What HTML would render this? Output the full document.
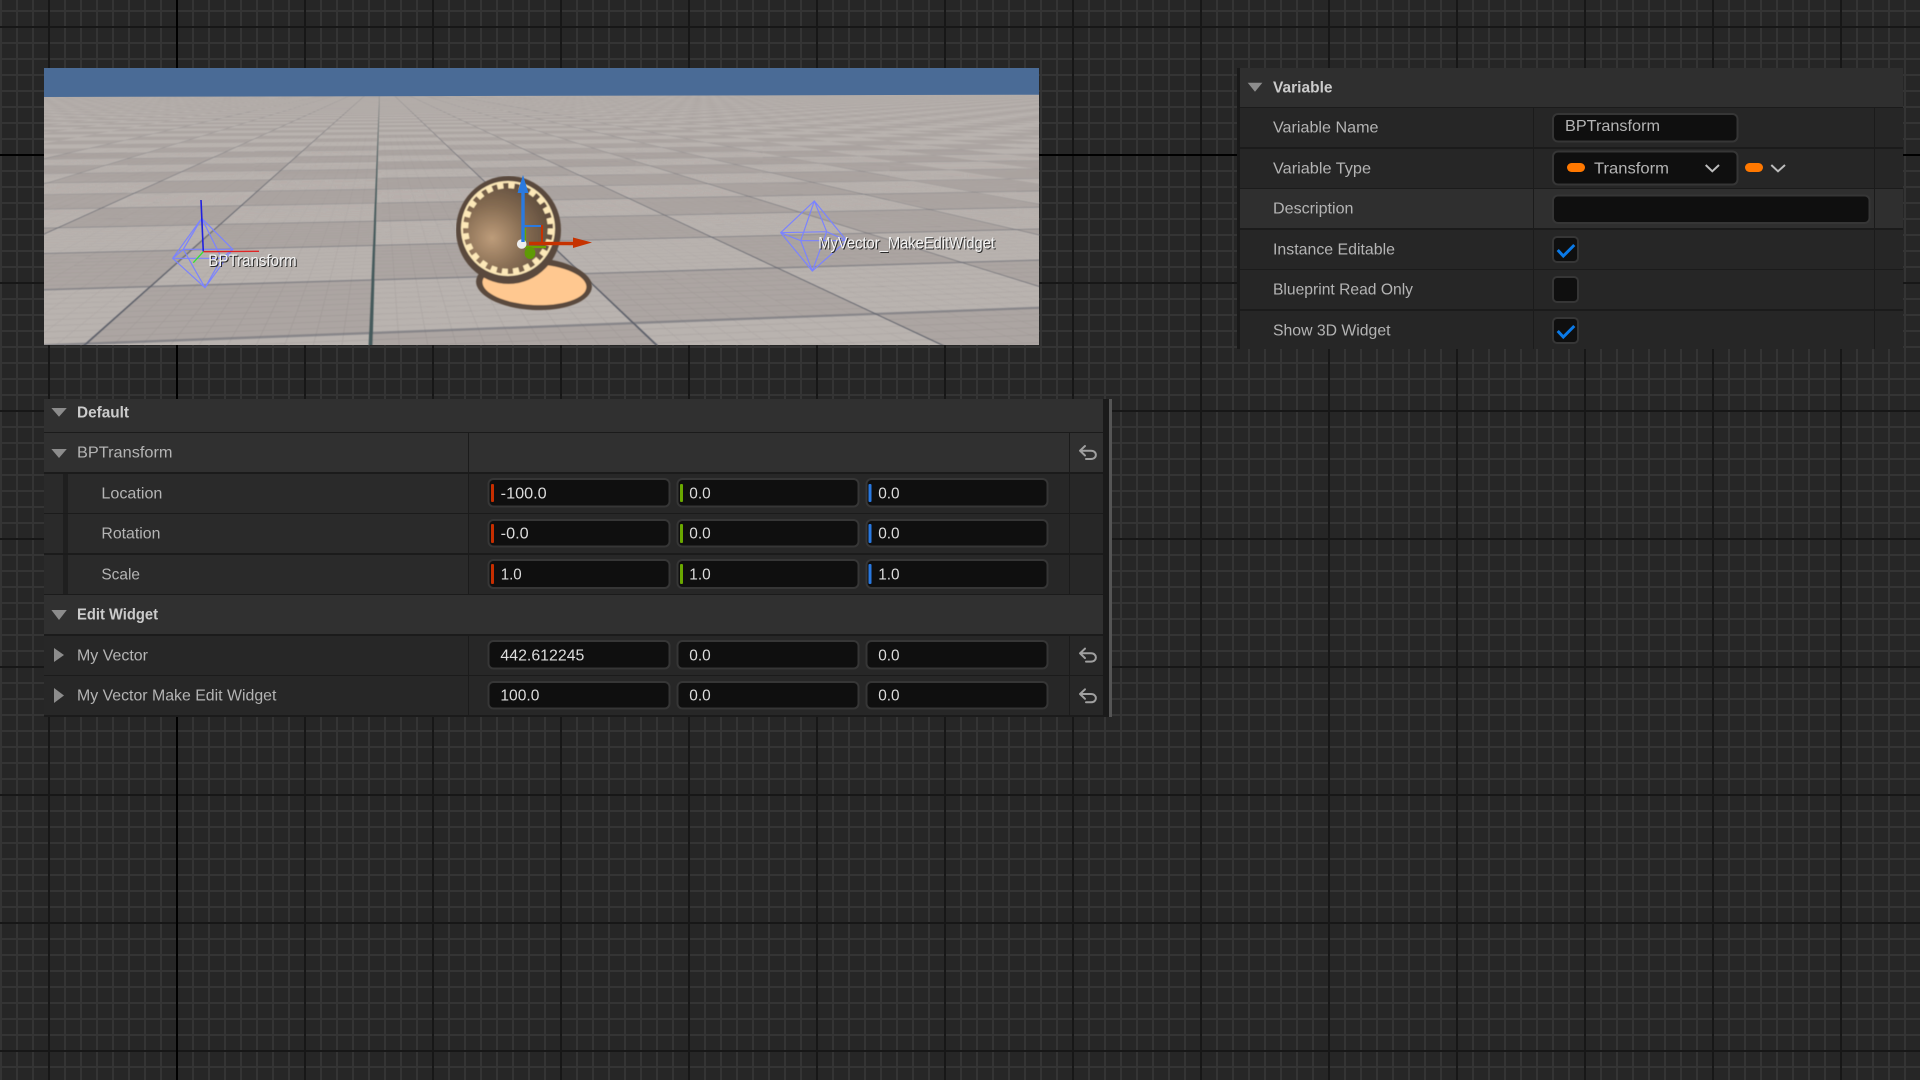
<!DOCTYPE html>
<html>
<head>
<meta charset="utf-8">
<style>
html,body{margin:0;padding:0;width:1920px;height:1080px;overflow:hidden;background-color:#262626;}
body{
background-image:
linear-gradient(#000,#000),
linear-gradient(#000,#000),
repeating-linear-gradient(90deg,transparent 0 48px,#171717 48px 50px,transparent 50px 128px),
repeating-linear-gradient(180deg,transparent 0 26px,#171717 26px 28px,transparent 28px 128px),
repeating-linear-gradient(90deg,#343434 0 2px,transparent 2px 16px),
repeating-linear-gradient(180deg,transparent 0 10px,#343434 10px 12px,transparent 12px 16px);
background-size:2px 100%,100% 2px,auto,auto,auto,auto;
background-position:176px 0,0 154px,0 0,0 0,0 0,0 0;
background-repeat:no-repeat,no-repeat,repeat,repeat,repeat,repeat;
}
svg{position:absolute;left:0;top:0;display:block;}
text{font-family:"Liberation Sans",sans-serif;font-size:16px;transform:translateY(-0.7px);}
.l{fill:#b4b4b4;}
.b{fill:#cbcbcb;font-weight:bold;}
.v{fill:#dcdcdc;}
.i{fill:#0f0f0f;stroke:#363636;stroke-width:2;}
.t{fill:#8c8c8c;}
.s{fill:#1b1b1b;}
.r{fill:none;stroke:#a0a0a0;stroke-width:2;stroke-linecap:round;stroke-linejoin:round;}
.c{fill:none;stroke:#0a7ae8;stroke-width:3;}
.h{fill:none;stroke:#bdbdbd;stroke-width:2;}
.lab{fill:#f4f4f4;font-size:17px;filter:drop-shadow(1px 1px 0 #2a2a2a);}
.oct{fill:none;stroke:#7b83ff;stroke-width:1.2;}
</style>
</head>
<body>
<svg width="1920" height="1080" viewBox="0 0 1920 1080" xmlns="http://www.w3.org/2000/svg">
<defs>
<clipPath id="vp"><rect x="44" y="68" width="995" height="277"/></clipPath>
<filter id="bl" x="0" y="0" width="100%" height="100%"><feGaussianBlur stdDeviation="0.5"/></filter>
<radialGradient id="disc" gradientUnits="userSpaceOnUse" cx="492" cy="238" r="58">
<stop offset="0" stop-color="#bd9c7a"/><stop offset="0.55" stop-color="#876d53"/><stop offset="1" stop-color="#63503f"/>
</radialGradient>
</defs>

<!-- viewport -->
<g clip-path="url(#vp)">
<rect x="44" y="68" width="995" height="277" fill="#b9b3af"/>
<g filter="url(#bl)">
<path id="dark" fill="#aca5a2"/>
<path id="fine" fill="#6f6b6a" fill-opacity="0.22"/>
<path id="latm" fill="#6b6d75" fill-opacity="0.6"/>
<path id="depm" fill="#5d606a"/>
<path id="cen" fill="#455a5c"/>
</g>
<polygon points="44,68 1039,68 1039,94.7 44,97" fill="#4a6b96"/>

<!-- left helper -->
<g class="oct">
<path d="M201.7 218.3L172.7 258.3L205 287.7L221.7 258.3Z M201.7 218.3L183.3 249.3L205 287.7 M201.7 218.3L232.7 249.3L205 287.7 M172.7 258.3L183.3 249.3L232.7 249.3L221.7 258.3L172.7 258.3"/>
</g>
<path d="M201 200L203.3 251.7" stroke="#2020e0" stroke-width="1.6" fill="none"/>
<path d="M203.3 251.7L259 251.3" stroke="#e02525" stroke-width="1.4" fill="none"/>
<path d="M203.3 251.7L193.3 262.7" stroke="#33e033" stroke-width="1.3" fill="none"/>
<text class="lab" x="208.3" y="266.7" textLength="88.4" lengthAdjust="spacingAndGlyphs">BPTransform</text>

<!-- right helper -->
<g class="oct">
<path d="M814.3 201L780.7 232.7L812.3 271L846.7 240.7Z M814.3 201L826.7 231.7L812.3 271 M814.3 201L800.7 240.7L812.3 271 M780.7 232.7L826.7 231.7L846.7 240.7L800.7 240.7Z"/>
</g>
<text class="lab" x="818.3" y="249.3" textLength="176.7" lengthAdjust="spacingAndGlyphs">MyVector_MakeEditWidget</text>

<!-- ball -->
<g filter="url(#bl)">
<ellipse cx="534" cy="284" rx="58" ry="26" fill="#5a4a3c" transform="rotate(3 534 284)"/>
<ellipse cx="534.5" cy="284.5" rx="52" ry="20.5" fill="#ffc890" transform="rotate(3 534 284)"/>
<ellipse cx="508.5" cy="230" rx="52.5" ry="54" fill="#5a4a3c"/>
<ellipse cx="508" cy="228.5" rx="47" ry="47.5" fill="#fde8b8"/>
<ellipse cx="508" cy="228.5" rx="45" ry="45.5" fill="url(#disc)"/>
<ellipse cx="508" cy="228.5" rx="42.5" ry="43" fill="none" stroke="#fde8b8" stroke-width="5.5" stroke-dasharray="6 5.2"/>
</g>
<g style="filter:blur(0.3px)">
<path d="M525 228V247H546" fill="none" stroke="#6aa300" stroke-width="2.2"/>
<ellipse cx="530" cy="253" rx="5.4" ry="6" fill="#5f9a05"/>
<circle cx="521.7" cy="244" r="4.8" fill="#eeeeee"/>
<path d="M523 226H542" fill="none" stroke="#2a7ae0" stroke-width="2"/>
<path d="M542 225V244" fill="none" stroke="#c63200" stroke-width="2"/>
<path d="M523 242V190" fill="none" stroke="#2a7ae0" stroke-width="3.4"/>
<polygon points="523,175 528.5,193 517.5,193" fill="#2a7ae0"/>
<path d="M529 243.5H574" fill="none" stroke="#c63200" stroke-width="3.4"/>
<polygon points="573,237.5 592,242.5 573,248" fill="#c63200"/>
</g>
</g>

<!-- Variable panel -->
<rect x="1237" y="68" width="3" height="281" fill="#1a1a1a"/>
<rect x="1240" y="68" width="663" height="281" fill="#262626"/>
<rect x="1240" y="68" width="663" height="39" fill="#2f2f2f"/>
<rect x="1240" y="189" width="663" height="39" fill="#2f2f2f"/>
<rect class="s" x="1240" y="107" width="663" height="1"/>
<rect class="s" x="1240" y="147" width="663" height="2"/>
<rect class="s" x="1240" y="188" width="663" height="1"/>
<rect class="s" x="1240" y="228" width="663" height="2"/>
<rect class="s" x="1240" y="269" width="663" height="1"/>
<rect class="s" x="1240" y="309" width="663" height="2"/>
<rect class="s" x="1533" y="107" width="1" height="242"/>
<rect class="s" x="1874" y="107" width="1" height="242"/>
<polygon class="t" points="1247.7,82.7 1262.4,82.7 1255,91.7"/>
<text class="b" x="1273" y="93" textLength="59.5" lengthAdjust="spacingAndGlyphs">Variable</text>
<text class="l" x="1273" y="133" textLength="105.5" lengthAdjust="spacingAndGlyphs">Variable Name</text>
<text class="l" x="1273" y="174" textLength="98" lengthAdjust="spacingAndGlyphs">Variable Type</text>
<text class="l" x="1273" y="214" textLength="80.5" lengthAdjust="spacingAndGlyphs">Description</text>
<text class="l" x="1273" y="255" textLength="122" lengthAdjust="spacingAndGlyphs">Instance Editable</text>
<text class="l" x="1273" y="295" textLength="140" lengthAdjust="spacingAndGlyphs">Blueprint Read Only</text>
<text class="l" x="1273" y="336" textLength="117.5" lengthAdjust="spacingAndGlyphs">Show 3D Widget</text>

<rect class="i" x="1553" y="114" width="184.5" height="27.5" rx="5"/>
<text class="l" x="1565" y="131.7" textLength="95" lengthAdjust="spacingAndGlyphs">BPTransform</text>
<rect class="i" x="1553" y="151.5" width="184.5" height="33" rx="5"/>
<rect x="1567" y="163" width="18" height="9" rx="4.5" fill="#ff7800"/>
<text class="l" x="1594" y="174" textLength="75" lengthAdjust="spacingAndGlyphs">Transform</text>
<path class="h" d="M1705.7 165L1712.3 171.3L1719 165"/>
<rect x="1745" y="163" width="18" height="9" rx="4.5" fill="#ff7800"/>
<path class="h" d="M1771.3 165L1778 171.3L1785 165"/>
<rect class="i" x="1553" y="195.5" width="316.5" height="27.5" rx="5"/>
<rect class="i" x="1553" y="237" width="25" height="25" rx="4"/>
<path class="c" d="M1557.7 250L1563.3 256L1574.3 245"/>
<rect class="i" x="1553" y="277" width="25" height="25" rx="4"/>
<rect class="i" x="1553" y="318" width="25" height="25" rx="4"/>
<path class="c" d="M1557.7 331L1563.3 337L1574.3 326"/>

<!-- Default panel -->
<rect x="44" y="399" width="1059" height="317" fill="#272727"/>
<rect x="1103" y="399" width="6" height="318" fill="#1a1a1a"/>
<rect x="1109" y="399" width="3" height="318" fill="#555555"/>
<rect x="44" y="399" width="1059" height="74" fill="#303030"/>
<rect x="44" y="473" width="424" height="121" fill="#2a2a2a"/>
<rect x="44" y="594" width="1059" height="41" fill="#303030"/>
<rect x="63" y="473" width="5" height="121" fill="#1f1f1f"/>
<rect class="s" x="44" y="432" width="1059" height="1"/>
<rect class="s" x="44" y="472" width="1059" height="2"/>
<rect class="s" x="44" y="513" width="1059" height="1"/>
<rect class="s" x="44" y="553" width="1059" height="2"/>
<rect class="s" x="44" y="594" width="1059" height="1"/>
<rect class="s" x="44" y="634" width="1059" height="2"/>
<rect class="s" x="44" y="675" width="1059" height="1"/>
<rect class="s" x="44" y="715" width="1059" height="2"/>
<rect class="s" x="468" y="432" width="1" height="162"/>
<rect class="s" x="468" y="635" width="1" height="81"/>
<rect class="s" x="1069" y="432" width="1" height="162"/>
<rect class="s" x="1069" y="635" width="1" height="81"/>

<polygon class="t" points="51.4,408 66.8,408 59,416.7"/>
<polygon class="t" points="51.4,449 66.8,449 59,458"/>
<polygon class="t" points="51.4,610 66.8,610 59,620"/>
<polygon class="t" points="54,648 64,655 54,662"/>
<polygon class="t" points="54,688 64,695.5 54,703"/>

<text class="b" x="77" y="418" textLength="52" lengthAdjust="spacingAndGlyphs">Default</text>
<text class="l" x="77" y="458" textLength="95.5" lengthAdjust="spacingAndGlyphs">BPTransform</text>
<text class="l" x="101.4" y="499" textLength="61" lengthAdjust="spacingAndGlyphs">Location</text>
<text class="l" x="101.4" y="539" textLength="59" lengthAdjust="spacingAndGlyphs">Rotation</text>
<text class="l" x="101.4" y="580" textLength="38.6" lengthAdjust="spacingAndGlyphs">Scale</text>
<text class="b" x="77" y="620" textLength="81" lengthAdjust="spacingAndGlyphs">Edit Widget</text>
<text class="l" x="77" y="661" textLength="71" lengthAdjust="spacingAndGlyphs">My Vector</text>
<text class="l" x="77" y="701" textLength="199.4" lengthAdjust="spacingAndGlyphs">My Vector Make Edit Widget</text>

<!-- inputs -->
<rect class="i" x="488.5" y="479" width="181" height="27.5" rx="5"/><rect class="i" x="677.5" y="479" width="181" height="27.5" rx="5"/><rect class="i" x="866.5" y="479" width="181" height="27.5" rx="5"/>
<rect class="i" x="488.5" y="520" width="181" height="26.5" rx="5"/><rect class="i" x="677.5" y="520" width="181" height="26.5" rx="5"/><rect class="i" x="866.5" y="520" width="181" height="26.5" rx="5"/>
<rect class="i" x="488.5" y="560" width="181" height="28" rx="5"/><rect class="i" x="677.5" y="560" width="181" height="28" rx="5"/><rect class="i" x="866.5" y="560" width="181" height="28" rx="5"/>
<rect class="i" x="488.5" y="641" width="181" height="27.5" rx="5"/><rect class="i" x="677.5" y="641" width="181" height="27.5" rx="5"/><rect class="i" x="866.5" y="641" width="181" height="27.5" rx="5"/>
<rect class="i" x="488.5" y="682" width="181" height="26.5" rx="5"/><rect class="i" x="677.5" y="682" width="181" height="26.5" rx="5"/><rect class="i" x="866.5" y="682" width="181" height="26.5" rx="5"/>

<g fill="#c62e00"><rect x="491" y="484" width="3" height="18" rx="1"/><rect x="491" y="524" width="3" height="19" rx="1"/><rect x="491" y="564" width="3" height="20" rx="1"/></g>
<g fill="#6aa800"><rect x="680" y="484" width="3" height="18" rx="1"/><rect x="680" y="524" width="3" height="19" rx="1"/><rect x="680" y="564" width="3" height="20" rx="1"/></g>
<g fill="#2878e0"><rect x="868.5" y="484" width="3" height="18" rx="1"/><rect x="868.5" y="524" width="3" height="19" rx="1"/><rect x="868.5" y="564" width="3" height="20" rx="1"/></g>

<text class="v" x="500.7" y="499" textLength="46" lengthAdjust="spacingAndGlyphs">-100.0</text>
<text class="v" x="689.3" y="499" textLength="21.4" lengthAdjust="spacingAndGlyphs">0.0</text>
<text class="v" x="878.2" y="499" textLength="21.4" lengthAdjust="spacingAndGlyphs">0.0</text>
<text class="v" x="500.7" y="539" textLength="28" lengthAdjust="spacingAndGlyphs">-0.0</text>
<text class="v" x="689.3" y="539" textLength="21.4" lengthAdjust="spacingAndGlyphs">0.0</text>
<text class="v" x="878.2" y="539" textLength="21.4" lengthAdjust="spacingAndGlyphs">0.0</text>
<text class="v" x="500.7" y="580" textLength="21" lengthAdjust="spacingAndGlyphs">1.0</text>
<text class="v" x="689.3" y="580" textLength="21.4" lengthAdjust="spacingAndGlyphs">1.0</text>
<text class="v" x="878.2" y="580" textLength="21.4" lengthAdjust="spacingAndGlyphs">1.0</text>
<text class="v" x="500.4" y="661" textLength="84" lengthAdjust="spacingAndGlyphs">442.612245</text>
<text class="v" x="689.3" y="661" textLength="21.4" lengthAdjust="spacingAndGlyphs">0.0</text>
<text class="v" x="878.2" y="661" textLength="21.4" lengthAdjust="spacingAndGlyphs">0.0</text>
<text class="v" x="500.4" y="701" textLength="39" lengthAdjust="spacingAndGlyphs">100.0</text>
<text class="v" x="689.3" y="701" textLength="21.4" lengthAdjust="spacingAndGlyphs">0.0</text>
<text class="v" x="878.2" y="701" textLength="21.4" lengthAdjust="spacingAndGlyphs">0.0</text>

<path class="r" d="M1085 446L1080 450.7L1085 455.5M1080 450.7H1091C1097.5 450.7 1097.5 459 1091 459H1086"/>
<path class="r" d="M1085 648.6L1080 653.3L1085 658.1M1080 653.3H1091C1097.5 653.3 1097.5 661.6 1091 661.6H1086"/>
<path class="r" d="M1085 689.3L1080 694L1085 698.8M1080 694H1091C1097.5 694 1097.5 702.3 1091 702.3H1086"/>
</svg>
<script>
(function(){
var a=.268,b=.0412,Ox=371,Oy=333,Dx=380,Dy=82,Lx=7000,Ly=82;
var X0=40,X1=1045,Y0=90,Y1=350;
function P(u,v){var w=1+a*u+b*v;if(w<.02)return null;
return [(Ox+a*u*Dx+b*v*Lx)/w,(Oy+a*u*Dy+b*v*Ly)/w];}
function cl(p,k,lim,s){var o=[],n=p.length;for(var i=0;i<n;i++){var A=p[i],B=p[(i+1)%n],ai=s*(A[k]-lim)<=0,bi=s*(B[k]-lim)<=0;
if(ai)o.push(A);
if(ai!=bi){var t=(lim-A[k])/(B[k]-A[k]);o.push([A[0]+t*(B[0]-A[0]),A[1]+t*(B[1]-A[1])]);}}
return o;}
function Q(u0,u1,v0,v1){var p=[P(u0,v0),P(u1,v0),P(u1,v1),P(u0,v1)];
if(p.indexOf(null)>=0)return '';
p=cl(p,0,X0,-1);if(p.length)p=cl(p,0,X1,1);if(p.length)p=cl(p,1,Y0,-1);if(p.length)p=cl(p,1,Y1,1);
if(p.length<3)return '';
return 'M'+p.map(function(q){return q[0].toFixed(1)+' '+q[1].toFixed(1);}).join('L')+'Z';}
var d='',u,v,i;
for(u=-1;u<66;u++)for(v=-26;v<46;v++){if(((u+v)%2+2)%2==1)d+=Q(u,u+1,v,v+1);}
document.getElementById('dark').setAttribute('d',d);
var f='';
for(i=-40;i<=60;i++){v=i/10;if(i%10==0)continue;f+=Q(-.5,14,v-.0012,v+.0012);}
for(i=-5;i<=100;i++){u=i/10;if(i%10==0)continue;f+=Q(u-.004,u+.004,-6,8);}
document.getElementById('fine').setAttribute('d',f);
var dm='';for(v=-4;v<=5;v++){if(v==0)continue;dm+=Q(-1,66,v-.005,v+.005);}
document.getElementById('depm').setAttribute('d',dm);
document.getElementById('cen').setAttribute('d',Q(-1,66,-.007,.007));
var lm='';for(u=-1;u<=10;u++){lm+=Q(u-.018,u+.018,-12,20);}
document.getElementById('latm').setAttribute('d',lm);
})();
</script>
</body>
</html>
